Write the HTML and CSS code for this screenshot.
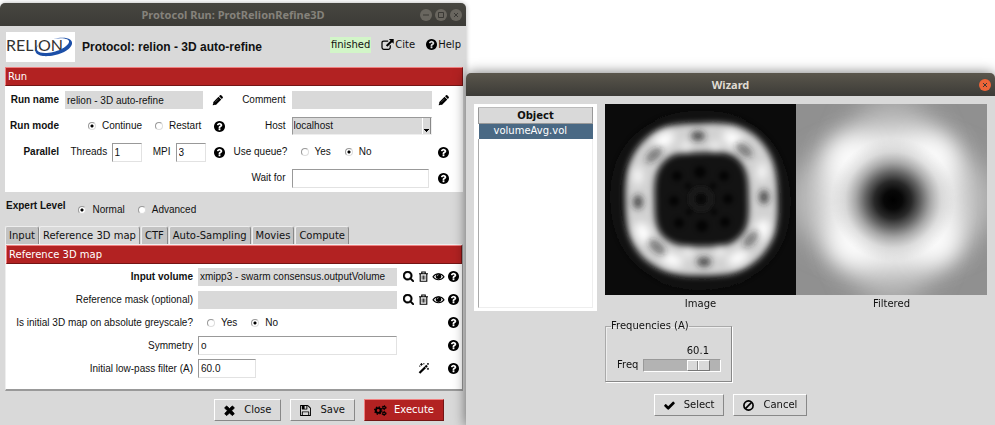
FILE: index.html
```html
<!DOCTYPE html>
<html lang="en">
<head>
<meta charset="utf-8">
<title>Protocol Run: ProtRelionRefine3D</title>
<link rel="stylesheet" href="styles.css">
</head>
<body>
<svg class="sprite" aria-hidden="true">
  <symbol id="help" viewBox="128 128 1536 1536"><path d="M1024 1376v-192q0-14-9-23t-23-9h-192q-14 0-23 9t-9 23v192q0 14 9 23t23 9h192q14 0 23-9t9-23zm256-672q0-88-55.500-163t-138.500-116-170-41q-243 0-371 213-15 24 8 42l132 100q7 6 19 6 16 0 25-12 53-68 86-92 34-24 86-24 48 0 85.500 26t37.500 59q0 38-20 61t-68 45q-63 28-115.500 86.500t-52.500 125.500v36q0 14 9 23t23 9h192q14 0 23-9t9-23q0-19 21.500-49.500t54.500-49.500q32-18 49-28.500t46-35 44.500-48 28-60.500 12.500-81zm384 192q0 209-103 385.500t-279.500 279.500-385.500 103-385.500-103-279.500-279.500-103-385.500 103-385.500 279.500-279.500 385.500-103 385.500 103 279.500 279.500 103 385.500z"/></symbol>
  <symbol id="search" viewBox="64 128 1664 1664"><path stroke="currentColor" stroke-width="60" d="M1216 832q0-185-131.500-316.500t-316.500-131.500-316.500 131.500-131.500 316.500 131.500 316.500 316.500 131.500 316.500-131.500 131.500-316.500zm512 832q0 52-38 90t-90 38q-54 0-90-38l-343-342q-179 124-399 124-143 0-273.500-55.500t-225-150-150-225-55.500-273.500 55.500-273.500 150-225 225-150 273.500-55.500 273.500 55.500 225 150 150 225 55.500 273.500q0 220-124 399l343 343q37 37 37 90z"/></symbol>
  <symbol id="pencil" viewBox="0 0 16 16"><path d="M1 15l1-5 7.500-7.500 4 4L6 14z"/><path d="M10.300 1.700l1.200-1.200q1-.8 2 0l2 2q.8 1 0 2l-1.200 1.200z"/><path fill="none" stroke="#999" stroke-width=".7" d="M4.500 10.500l5-5M2.200 12.300l1.500 1.500"/></symbol>
  <symbol id="check" viewBox="100 100 1600 1600"><path d="M1671 566q0 40-28 68l-724 724-136 136q-28 28-68 28t-68-28l-136-136-362-362q-28-28-28-68t28-68l136-136q28-28 68-28t68 28l294 295 656-657q28-28 68-28t68 28l136 136q28 28 28 68z"/></symbol>
  <symbol id="times" viewBox="200 230 1392 1392"><path stroke="currentColor" stroke-width="90" d="M1490 1322q0 40-28 68l-136 136q-28 28-68 28t-68-28l-294-294-294 294q-28 28-68 28t-68-28l-136-136q-28-28-28-68t28-68l294-294-294-294q-28-28-28-68t28-68l136-136q28-28 68-28t68 28l294 294 294-294q28-28 68-28t68 28l136 136q28 28 28 68t-28 68l-294 294 294 294q28 28 28 68z"/></symbol>
  <symbol id="save" viewBox="128 128 1536 1536"><path d="M512 1536h768v-384h-768v384zm896 0h128v-896q0-14-10-38.500t-20-34.500l-281-281q-10-10-34-20t-39-10v416q0 40-28 68t-68 28h-576q-40 0-68-28t-28-68v-416h-128v1280h128v-416q0-40 28-68t68-28h832q40 0 68 28t28 68v416zm-384-928v-320q0-13-9.500-22.500t-22.500-9.500h-192q-13 0-22.500 9.500t-9.500 22.500v320q0 13 9.500 22.500t22.500 9.500h192q13 0 22.500-9.500t9.500-22.500zm640 32v928q0 40-28 68t-68 28h-1344q-40 0-68-28t-28-68v-1344q0-40 28-68t68-28h928q40 0 88 20t76 48l280 280q28 28 48 76t20 88z"/></symbol>
  <symbol id="trash" viewBox="0 0 16 16"><path fill="none" stroke="currentColor" stroke-width="1.600" d="M1.500 4h13M5.500 4V1.500h5V4M3.200 4v11h9.600V4"/><path fill="none" stroke="currentColor" stroke-width="1.100" d="M6 6.500v6M8 6.500v6M10 6.500v6"/></symbol>
  <symbol id="eye" viewBox="0 0 18 16"><path fill="none" stroke="currentColor" stroke-width="1.500" d="M1 8.500C5 2.500 13 2.500 17 8.500 13 14 5 14 1 8.500z"/><circle cx="9" cy="7.500" r="4"/><path fill="none" stroke="#ddd" d="M7 7.500Q7 5.500 9 5.500"/></symbol>
  <symbol id="link" viewBox="0 0 18 16"><path fill="none" stroke="currentColor" stroke-width="1.800" d="M10 3H3.500Q1 3 1 5.500v7Q1 15 3.500 15h7q2.500 0 2.500-2.500V9"/><path d="M11 0h7v7l-2.400-2.400-6.800 6.800-2.200-2.200 6.800-6.800z"/></symbol>
  <symbol id="ban" viewBox="0 0 16 16"><circle cx="8" cy="8" r="6.700" fill="none" stroke="currentColor" stroke-width="2.400"/><path stroke="currentColor" stroke-width="2.400" d="M3.500 12.500l9-9"/></symbol>
  <symbol id="magic" viewBox="0 0 16 16"><path d="M1 13.500L12 2.500l2.300 2.300-11 11z"/><path stroke="#fff" stroke-width=".8" d="M9.500 5l2.300 2.300"/><path stroke="currentColor" stroke-width="1.300" d="M5 0v4M3 2h4M8.500 0v2M1.500 4.500h2M14.500 0v2.600M13.200 1.300h2.600M14.500 7v3M13 8.500h3"/></symbol>
  <symbol id="cogs" viewBox="0 0 20 17"><circle cx="6.500" cy="8.500" r="3.700" fill="none" stroke="currentColor" stroke-width="3"/><circle cx="6.500" cy="8.500" r="5.600" fill="none" stroke="currentColor" stroke-width="2" stroke-dasharray="2.200 2.200"/><circle cx="15.500" cy="4" r="2" fill="none" stroke="currentColor" stroke-width="1.800"/><circle cx="15.500" cy="4" r="3.200" fill="none" stroke="currentColor" stroke-width="1.400" stroke-dasharray="1.700 1.650"/><circle cx="15.500" cy="13" r="2" fill="none" stroke="currentColor" stroke-width="1.800"/><circle cx="15.500" cy="13" r="3.200" fill="none" stroke="currentColor" stroke-width="1.400" stroke-dasharray="1.700 1.650"/></symbol>
</svg>

<main class="desktop">
  <section class="window protocol">
    <header class="titlebar inactive">
      <h1>Protocol Run: ProtRelionRefine3D</h1>
      <div class="controls">
        <button class="dot" aria-label="Minimize"><svg viewBox="0 0 12 12"><path d="M3 6h6"/></svg></button>
        <button class="dot" aria-label="Maximize"><svg viewBox="0 0 12 12"><path d="M3.500 3.500h5v5h-5z"/></svg></button>
        <button class="dot" aria-label="Close window"><svg viewBox="0 0 12 12"><path d="M4 4l4 4M8 4l-4 4"/></svg></button>
      </div>
    </header>

    <div class="heading">
      <svg class="logo" viewBox="0 0 69 30" role="img" aria-label="Relion">
        <rect width="69" height="30" fill="#fff"/>
        <text x="0" y="19" class="logo-text" fill="#333">RELION</text>
        <path d="M47 7C60 4 67 7 66 12 64 20 48 25 37 24 29 23 27 18 32 13 29 18 32 21 39 21 50 21 62 15 63 10 64 7 57 5 47 7z" fill="#1c4fa8"/>
      </svg>
      <h2>Protocol: relion - 3D auto-refine</h2>
      <span class="status">finished</span>
      <a class="tool" href="#cite"><svg class="icon wide"><use href="#link"/></svg>Cite</a>
      <a class="tool" href="#help-page"><svg class="icon"><use href="#help"/></svg>Help</a>
    </div>

    <section class="panel">
      <h3 class="bar">Run</h3>
      <div class="run-grid">
        <label class="strong" for="run-name">Run name</label>
        <input class="flat short" id="run-name" value="relion - 3D auto-refine">
        <button class="act edit" aria-label="Edit run name"><svg class="icon"><use href="#pencil"/></svg></button>
        <label for="comment">Comment</label>
        <input class="flat" id="comment">
        <button class="act edit" aria-label="Edit comment"><svg class="icon"><use href="#pencil"/></svg></button>

        <span class="strong">Run mode</span>
        <div class="options mode">
          <label><input type="radio" name="mode" checked>Continue</label>
          <label><input type="radio" name="mode">Restart</label>
        </div>
        <button class="act" aria-label="Run mode help"><svg class="icon"><use href="#help"/></svg></button>
        <label for="host">Host</label>
        <select id="host"><option>localhost</option></select>
        <span></span>

        <span class="strong">Parallel</span>
        <div class="counts">
          <label for="threads">Threads</label><input class="sunken" id="threads" value="1">
          <label for="mpi">MPI</label><input class="sunken" id="mpi" value="3">
        </div>
        <button class="act" aria-label="Parallel help"><svg class="icon"><use href="#help"/></svg></button>
        <span>Use queue?</span>
        <div class="options queue">
          <label><input type="radio" name="queue">Yes</label>
          <label><input type="radio" name="queue" checked>No</label>
        </div>
        <button class="act" aria-label="Queue help"><svg class="icon"><use href="#help"/></svg></button>

        <label class="wait" for="wait">Wait for</label>
        <input class="sunken short" id="wait">
        <button class="act" aria-label="Wait for help"><svg class="icon"><use href="#help"/></svg></button>
      </div>
    </section>

    <div class="expert">
      <strong>Expert Level</strong>
      <div class="options level">
        <label><input type="radio" name="level" checked>Normal</label>
        <label><input type="radio" name="level">Advanced</label>
      </div>
    </div>

    <nav class="tabs">
      <button>Input</button><button class="current">Reference 3D map</button><button>CTF</button><button>Auto-Sampling</button><button>Movies</button><button>Compute</button>
    </nav>

    <section class="panel params">
      <h3 class="bar">Reference 3D map</h3>
      <div class="param-grid">
        <label class="strong" for="volume">Input volume</label>
        <input class="flat" id="volume" value="xmipp3 - swarm consensus.outputVolume">
        <div class="acts">
          <button class="act" aria-label="Search volume"><svg class="icon"><use href="#search"/></svg></button>
          <button class="act" aria-label="Clear volume"><svg class="icon"><use href="#trash"/></svg></button>
          <button class="act" aria-label="View volume"><svg class="icon wide"><use href="#eye"/></svg></button>
          <button class="act" aria-label="Volume help"><svg class="icon"><use href="#help"/></svg></button>
        </div>

        <label for="mask">Reference mask (optional)</label>
        <input class="flat" id="mask">
        <div class="acts">
          <button class="act" aria-label="Search mask"><svg class="icon"><use href="#search"/></svg></button>
          <button class="act" aria-label="Clear mask"><svg class="icon"><use href="#trash"/></svg></button>
          <button class="act" aria-label="View mask"><svg class="icon wide"><use href="#eye"/></svg></button>
          <button class="act" aria-label="Mask help"><svg class="icon"><use href="#help"/></svg></button>
        </div>

        <span>Is initial 3D map on absolute greyscale?</span>
        <div class="options scale">
          <label><input type="radio" name="grey">Yes</label>
          <label><input type="radio" name="grey" checked>No</label>
        </div>
        <div class="acts"><button class="act last" aria-label="Greyscale help"><svg class="icon"><use href="#help"/></svg></button></div>

        <label for="symmetry">Symmetry</label>
        <input class="sunken" id="symmetry" value="o">
        <div class="acts"><button class="act last" aria-label="Symmetry help"><svg class="icon"><use href="#help"/></svg></button></div>

        <label for="filter">Initial low-pass filter (A)</label>
        <input class="sunken number" id="filter" value="60.0">
        <div class="acts">
          <button class="act second" aria-label="Filter wizard"><svg class="icon"><use href="#magic"/></svg></button>
          <button class="act last" aria-label="Filter help"><svg class="icon"><use href="#help"/></svg></button>
        </div>
      </div>
    </section>

    <footer class="actions">
      <button class="push"><svg class="icon"><use href="#times"/></svg>Close</button>
      <button class="push"><svg class="icon"><use href="#save"/></svg>Save</button>
      <button class="push primary"><svg class="icon wide"><use href="#cogs"/></svg>Execute</button>
    </footer>
  </section>

  <section class="window wizard">
    <header class="titlebar">
      <h1>Wizard</h1>
      <div class="controls"><button class="dot close" aria-label="Close wizard"><svg viewBox="0 0 12 12"><path d="M4 4l4 4M8 4l-4 4"/></svg></button></div>
    </header>
    <div class="wizard-body">
      <div class="list">
        <table>
          <thead><tr><th>Object</th></tr></thead>
          <tbody><tr><td>volumeAvg.vol</td></tr></tbody>
        </table>
      </div>
      <div class="preview">
        <div class="images">
          <figure>
            <svg viewBox="0 0 191 191" role="img" aria-label="Volume slice">
              <defs>
                <filter id="b2" x="-50%" y="-50%" width="200%" height="200%"><feGaussianBlur stdDeviation="2"/></filter>
                <filter id="b3" x="-50%" y="-50%" width="200%" height="200%"><feGaussianBlur stdDeviation="3"/></filter>
                <filter id="b4" x="-50%" y="-50%" width="200%" height="200%"><feGaussianBlur stdDeviation="4"/></filter>
                <filter id="b14" x="-50%" y="-50%" width="200%" height="200%"><feGaussianBlur stdDeviation="13"/></filter>
                <radialGradient id="core">
                  <stop offset="0" stop-color="#000"/><stop offset=".15" stop-color="#030303" stop-opacity=".98"/><stop offset=".3" stop-color="#080808" stop-opacity=".86"/><stop offset=".45" stop-color="#101010" stop-opacity=".62"/><stop offset=".6" stop-color="#202020" stop-opacity=".36"/><stop offset=".78" stop-color="#404040" stop-opacity=".13"/><stop offset="1" stop-color="#606060" stop-opacity="0"/>
                </radialGradient>
              </defs>
              <rect width="191" height="191" fill="#0b0b0b"/>
              <path d="M96 12C150 10 178 45 181 96c0 54-32 84-85 85-50 0-84-32-86-85C9 44 44 10 96 12z" fill="none" stroke="#171717" stroke-width="5" filter="url(#b4)"/>
              <rect x="50" y="50" width="92" height="91" rx="32" fill="#131313"/>
              <g filter="url(#b3)">
                <path d="M96 34C123 32 136 36 146 48 157 61 158 76 158 96 159 120 156 133 143 145 129 157 118 157 97 157 72 158 59 153 48 143 36 130 35 117 35 96 34 73 37 60 48 48 60 35 72 34 96 34z" fill="none" stroke="#d2d2d2" stroke-width="29"/>
              </g>
              <g fill="#fff" filter="url(#b4)">
                <ellipse cx="59" cy="36" rx="11" ry="7" transform="rotate(-30 59 36)"/><ellipse cx="128" cy="35" rx="11" ry="7" transform="rotate(30 128 35)"/>
                <ellipse cx="38" cy="129" rx="7" ry="11" transform="rotate(-25 38 129)"/><ellipse cx="157" cy="126" rx="7" ry="11" transform="rotate(20 157 126)"/>
                <ellipse cx="67" cy="156" rx="11" ry="6" transform="rotate(20 67 156)"/><ellipse cx="133" cy="154" rx="11" ry="6" transform="rotate(-25 133 154)"/>
                <ellipse cx="33" cy="72" rx="4" ry="9"/><ellipse cx="157" cy="68" rx="4" ry="9"/>
                <circle cx="81" cy="42" r="4"/><circle cx="110" cy="42" r="4"/><circle cx="83" cy="149" r="4"/><circle cx="115" cy="148" r="4"/>
              </g>
              <g fill="#222" fill-opacity=".75" filter="url(#b3)">
                <ellipse cx="93" cy="32" rx="7" ry="5"/><ellipse cx="99" cy="158" rx="7" ry="5"/>
                <ellipse cx="33" cy="98" rx="5" ry="7"/><ellipse cx="159" cy="93" rx="5" ry="7"/>
                <g fill-opacity=".5"><ellipse cx="49" cy="51" rx="10" ry="5" transform="rotate(-42 49 51)"/><ellipse cx="139" cy="46" rx="10" ry="5" transform="rotate(38 139 46)"/>
                <ellipse cx="52" cy="143" rx="10" ry="5" transform="rotate(42 52 143)"/><ellipse cx="146" cy="135" rx="10" ry="5" transform="rotate(-48 146 135)"/></g>
              </g>
              <circle cx="96" cy="95" r="10" fill="none" stroke="#1d1d1d" stroke-width="5" filter="url(#b2)"/>
              <g fill="#000" fill-opacity=".75" filter="url(#b2)">
                <circle cx="96" cy="95" r="4"/><circle cx="95" cy="68" r="6"/><circle cx="119" cy="72" r="5"/><circle cx="72" cy="72" r="5"/><circle cx="69" cy="97" r="5"/><circle cx="123" cy="95" r="5"/><circle cx="74" cy="119" r="5"/><circle cx="97" cy="122" r="6"/><circle cx="120" cy="118" r="5"/><circle cx="83" cy="82" r="3"/><circle cx="108" cy="82" r="3"/><circle cx="84" cy="108" r="3"/><circle cx="109" cy="108" r="3"/>
              </g>
            </svg>
            <figcaption>Image</figcaption>
          </figure>
          <figure>
            <svg viewBox="0 0 191 191" role="img" aria-label="Filtered volume slice">
              <rect width="191" height="191" fill="#909090"/>
              <ellipse cx="96" cy="96" rx="108" ry="60" fill="#b4b4b4" filter="url(#b14)"/>
              <ellipse cx="96" cy="96" rx="56" ry="108" fill="#b0b0b0" filter="url(#b14)"/>
              <rect x="25" y="25" width="143" height="143" rx="54" fill="#f0f0f0" filter="url(#b14)" transform="rotate(-3 96 96)"/>
              <g fill="#fff" filter="url(#b14)"><circle cx="53" cy="54" r="20"/><circle cx="138" cy="53" r="20"/><circle cx="56" cy="140" r="20"/><circle cx="141" cy="138" r="20"/></g>
              <circle cx="97" cy="96" r="62" fill="url(#core)"/>
            </svg>
            <figcaption>Filtered</figcaption>
          </figure>
        </div>
        <fieldset>
          <legend>Frequencies (A)</legend>
          <label for="freq">Freq</label>
          <div class="slider">
            <output for="freq">60.1</output>
            <input type="range" id="freq" min="0" max="74" step="0.1" value="60.1">
          </div>
        </fieldset>
      </div>
    </div>
    <footer class="actions">
      <button class="push"><svg class="icon"><use href="#check"/></svg>Select</button>
      <button class="push"><svg class="icon"><use href="#ban"/></svg>Cancel</button>
    </footer>
  </section>
</main>
</body>
</html>
```
FILE: styles.css
```css
* {
  box-sizing: border-box;
}

body {
  margin: 0;
  background: #fff;
  color: #111;
  font: 10px/14px "Liberation Sans", Arial, sans-serif;
}

h1, h2, h3, figure, fieldset {
  margin: 0;
  padding: 0;
}

button, input, select {
  margin: 0;
  border: 0;
  border-radius: 0;
  font: inherit;
  color: inherit;
}

button {
  padding: 0;
  background: none;
}

.sprite {
  position: absolute;
  width: 0;
  height: 0;
}

.desktop {
  display: grid;
  grid-template-columns: 466fr 529fr;
  min-height: 100vh;
  overflow: hidden;
}

.window {
  display: flex;
  flex-direction: column;
  background: #d9d9d9;
  border-radius: 6px 6px 0 0;
}

.protocol {
  margin-top: 3px;
  box-shadow: 0 0 5px rgba(0, 0, 0, .3);
}

.wizard {
  z-index: 1;
  margin-top: 73px;
  border-bottom: 1px solid #bbb;
  box-shadow: 0 0 13px rgba(0, 0, 0, .55);
  font-family: "DejaVu Sans", sans-serif;
}

.titlebar {
  display: grid;
  grid-template-columns: 1fr auto 1fr;
  align-items: center;
  height: 23px;
  padding: 0 4px;
  border-radius: 5px 5px 0 0;
  background: linear-gradient(#5a564c, #3c3b37);
  color: #dfdbd2;
}

.titlebar h1 {
  grid-column: 2;
  font: bold 11px/14px "Noto Sans", sans-serif;
}

.inactive {
  background: linear-gradient(#474640, #3c3b37);
  color: #85827b;
}

.controls {
  display: flex;
  justify-content: flex-end;
  gap: 3px;
}

.dot {
  width: 12px;
  height: 12px;
  border-radius: 50%;
  background: #69665f;
}

.dot svg {
  display: block;
  fill: none;
  stroke: #3a3935;
}

.close {
  background: #ee6538;
}

.heading {
  display: flex;
  align-items: center;
  height: 41px;
  padding: 0 5px 0 6px;
}

.heading h2 {
  flex: 1;
  margin-left: 7px;
  font-size: 12px;
}

.logo {
  width: 69px;
  height: 30px;
}

.logo-text {
  font: 16px "Lato", sans-serif;
}

.status, .tool, .bar, .tabs, .actions {
  font-family: "DejaVu Sans", sans-serif;
  font-weight: normal;
}

.status {
  padding: 1px;
  margin-bottom: 4px;
  background: #d2f5c8;
}

.tool {
  display: flex;
  align-items: center;
  margin: 0 0 4px 10px;
  gap: 1px;
  color: inherit;
  text-decoration: none;
}

.tool + .tool {
  margin-left: 11px;
}

.icon {
  display: block;
  flex: none;
  width: 11px;
  height: 11px;
  fill: currentColor;
  color: #000;
}

.wide {
  width: 13px;
}

.panel {
  margin: 0 3px 0 5px;
  background: #fff;
}

.bar {
  height: 19px;
  padding-left: 2px;
  border: 1px solid #741515;
  border-top-color: #f08080;
  border-left-color: #f08080;
  background: #b22222;
  color: #fff;
  font-size: 10px;
  line-height: 17px;
}

.run-grid {
  display: grid;
  grid-template-columns: 49px 1fr 16px 52px 1fr 11px;
  grid-auto-rows: 26px;
  gap: 0 6px;
  align-items: center;
  padding: 1px 14px 1px 5px;
}

.run-grid > label,
.run-grid > span,
.param-grid > label,
.param-grid > span {
  text-align: right;
  white-space: nowrap;
}

.strong {
  font-weight: bold;
}

.run-grid > .wait {
  grid-column: 4;
}

input, select {
  min-width: 0;
  width: 100%;
}

.flat {
  height: 18px;
  padding: 0 2px;
  background: #d9d9d9;
}

.short {
  width: calc(100% - 3px);
}

.sunken {
  height: 19px;
  padding: 0 2px;
  border: 1px solid #e2e2e2;
  border-top-color: #999;
  border-left-color: #999;
  background: #fff;
}

select {
  height: 18px;
  padding: 0 1px;
  appearance: none;
  border: 1px solid #eee;
  border-top-color: #999;
  border-left-color: #999;
  background:
    linear-gradient(#000, #000) right 2px bottom 4px / 5px 1px no-repeat,
    linear-gradient(#000, #000) right 3px bottom 3px / 3px 1px no-repeat,
    linear-gradient(#000, #000) right 4px bottom 2px / 1px 1px no-repeat,
    linear-gradient(#888, #888) right top / 1px 100% no-repeat,
    linear-gradient(#fff, #fff) right 8px top / 1px 100% no-repeat,
    #d9d9d9;
}

.act {
  justify-self: center;
}

.edit {
  justify-self: start;
}

.options, .options label {
  display: flex;
  align-items: center;
}

.options label {
  gap: 6px;
}

.options input {
  flex: none;
  appearance: none;
  width: 8px;
  height: 8px;
  border: 1px solid #ddd;
  border-top-color: #999;
  border-left-color: #999;
  border-radius: 50%;
  background: #fff;
}

.options input:checked {
  background: radial-gradient(circle, #000 1px, #fff 2px);
}

.mode {
  gap: 13px;
  padding-left: 23px;
}

.queue,
.scale {
  gap: 14px;
  padding-left: 9px;
}

.counts {
  display: grid;
  grid-template-columns: 36px 30px 24px 30px;
  justify-content: end;
  align-items: center;
  column-gap: 5px;
}

.counts input + label {
  text-align: right;
}

.expert {
  display: flex;
  align-items: flex-start;
  height: 34px;
  padding: 7px 0 0 6px;
}

.level {
  gap: 13px;
  margin-left: 13px;
  padding-top: 4px;
}

.tabs {
  display: flex;
  align-items: flex-end;
  margin-left: 5px;
}

.tabs button {
  height: 18px;
  padding: 0 3px;
  border: 1px solid #eee;
  border-right-color: #888;
  border-bottom: 0;
  border-radius: 2px 3px 0 0;
  background: #c3c3c3;
  white-space: nowrap;
}

.tabs .current {
  background: #d9d9d9;
}

.tabs .current ~ button {
  margin-left: 1px;
}

.params {
  border: 1px solid #999;
  border-top-color: #eee;
  border-left-color: #eee;
  border-bottom-width: 2px;
}

.param-grid {
  display: grid;
  grid-template-columns: 187px 1fr 58px;
  grid-auto-rows: 23px;
  column-gap: 5px;
  align-items: center;
  padding: 1px 2px 9px 0;
}

.number {
  width: 58px;
}

.acts {
  display: grid;
  grid-template-columns: repeat(4, 13px);
  column-gap: 2px;
  justify-content: end;
  justify-items: center;
}

.last {
  grid-column: 4;
}

.second {
  grid-column: 2;
}

.actions {
  display: flex;
  justify-content: flex-end;
  gap: 9px;
  padding: 8px 22px 5px;
}

.push {
  display: flex;
  align-items: center;
  gap: 9px;
  height: 22px;
  padding: 0 9px;
  border: 1px solid #888;
  border-top-color: #fff;
  border-left-color: #fff;
}

.primary {
  gap: 7px;
  border-color: #741515;
  border-top-color: #f08080;
  border-left-color: #f08080;
  background: #b22222;
  color: #fff;
}

.wizard .actions {
  justify-content: center;
  padding: 12px 0 8px;
}

.wizard-body {
  display: grid;
  grid-template-columns: 123px 1fr;
  gap: 8px;
  padding: 8px 8px 0;
}

.list {
  align-self: start;
  height: 207px;
  padding: 3px 4px 4px;
  background: #fff;
}

.list table {
  width: 100%;
  border-collapse: collapse;
}

.list::after {
  content: "";
  display: block;
  height: 168px;
  border: 1px solid #eee;
  border-left-color: #aaa;
  border-top: 0;
}

th {
  height: 16px;
  padding: 0;
  border: 1px solid #999;
  border-top-color: #bbb;
  background: #d9d9d9;
  line-height: 14px;
}

td {
  height: 15px;
  padding: 0 0 0 15px;
  background: #4a6984;
  color: #fff;
}

.images {
  display: grid;
  grid-template-columns: 1fr 1fr;
  text-align: center;
}

.images svg {
  display: block;
  width: 100%;
}

figcaption {
  padding-top: 1px;
  line-height: 15px;
}

fieldset {
  display: flex;
  align-items: flex-end;
  gap: 5px;
  width: 127px;
  min-width: 0;
  height: 63px;
  margin-top: 8px;
  padding: 0 10px 9px 11px;
  border: 1px solid #888;
  border-top-color: #aaa;
  border-left-color: #aaa;
  box-shadow: inset 1px 1px #eee, 1px 1px #fff;
}

legend {
  margin-left: -6px;
  padding: 0;
}

.slider {
  flex: 1;
  min-width: 0;
}

output {
  display: block;
  padding-right: 12px;
  text-align: right;
}

input[type="range"] {
  display: block;
  appearance: none;
  height: 13px;
  margin-top: 1px;
  border: 1px solid #999;
  border-right-color: #fff;
  border-bottom-color: #fff;
  background: #b3b3b3;
}

input[type="range"]::-webkit-slider-thumb {
  appearance: none;
  width: 23px;
  height: 11px;
  border: 1px solid #777;
  border-top-color: #fff;
  border-left-color: #fff;
  background: linear-gradient(90deg, #d9d9d9 9px, #888 9px 10px, #fff 10px 11px, #d9d9d9 11px);
}
```
